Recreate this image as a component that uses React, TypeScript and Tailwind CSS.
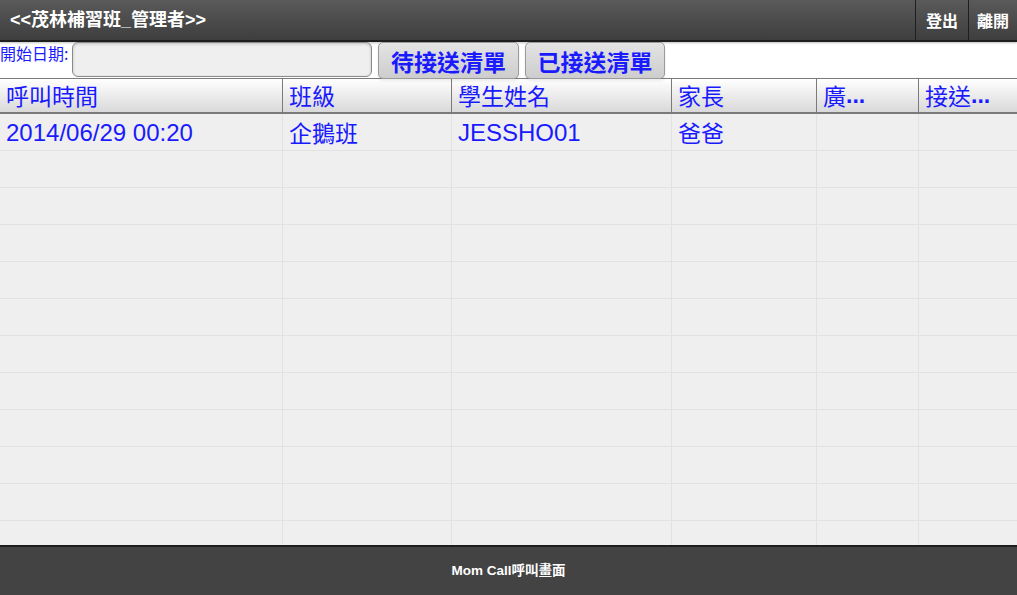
const cols = [
  { label: "呼叫時間", w: "w-[282px]" },
  { label: "班級", w: "w-[169px]" },
  { label: "學生姓名", w: "w-[220px]" },
  { label: "家長", w: "w-[145px]" },
  { label: "廣", dots: true, w: "w-[102px]" },
  { label: "接送", dots: true, w: "flex-1" },
];

const rows = [
  ["2014/06/29 00:20", "企鵝班", "JESSHO01", "爸爸", "", ""],
  ...Array.from({ length: 11 }, () => ["", "", "", "", "", ""]),
];

const cjk = "font-['Noto_Sans_CJK_TC',sans-serif]";
const latin = "font-['Liberation_Sans','Noto_Sans_CJK_TC',sans-serif]";

export default function App() {
  return (
    <div className="w-[1017px] h-[595px] flex flex-col bg-white overflow-hidden">
      {/* top bar */}
      <div className="h-[42px] flex items-stretch bg-gradient-to-b from-[#5a5a5a] to-[#3e3e3e] border-b-2 border-[#1e1e1e] shadow-[0_1px_2px_rgba(0,0,0,0.25)]">
        <div
          className={`flex-1 flex items-center pl-[10px] text-white font-bold text-[18px] ${latin}`}
        >
          &lt;&lt;茂林補習班_管理者&gt;&gt;
        </div>
        <button
          className={`w-[53px] border-l border-[#1f1f1f] text-white font-bold text-[16px] ${cjk}`}
        >
          登出
        </button>
        <button
          className={`w-[49px] border-l border-[#1f1f1f] text-white font-bold text-[16px] ${cjk}`}
        >
          離開
        </button>
      </div>

      {/* toolbar */}
      <div className="h-[36px] flex items-start relative z-10">
        <span
          className={`w-[68px] mt-[1px] text-[16px] leading-[20px] text-[#1a1aff] whitespace-nowrap ${cjk}`}
        >
          開始日期:
        </span>
        <div className="ml-[4px] w-[300px] h-[35px] rounded-[6px] border border-[#8a8a8a] bg-[#efefef] shadow-[inset_0_1px_3px_rgba(0,0,0,0.2)]" />
        <button
          className={`ml-[6px] w-[141px] h-[37px] rounded-[5px] border border-[#9a9a9a] bg-gradient-to-b from-[#e4e4e4] to-[#cdcdcd] text-[#1a1aff] font-bold text-[23px] leading-none pt-[2px] shadow-[0_2px_3px_rgba(0,0,0,0.08)] ${cjk}`}
        >
          待接送清單
        </button>
        <button
          className={`ml-[6px] w-[140px] h-[37px] rounded-[5px] border border-[#9a9a9a] bg-gradient-to-b from-[#e4e4e4] to-[#cdcdcd] text-[#1a1aff] font-bold text-[23px] leading-none pt-[2px] shadow-[0_2px_3px_rgba(0,0,0,0.08)] ${cjk}`}
        >
          已接送清單
        </button>
      </div>

      {/* table head */}
      <div className="h-[36px] flex border-t border-b-2 border-[#7a7a7a] bg-gradient-to-b from-white to-[#d9d9d9]">
        {cols.map((c, i) => (
          <div
            key={c.label}
            className={`${c.w} flex items-center pl-[6px] text-[23px] leading-none text-[#1a1aff] whitespace-nowrap ${cjk} ${
              i > 0 ? "border-l border-[#7a7a7a]" : ""
            }`}
          >
            {c.label}
            {c.dots && <span className={`font-bold ${latin}`}>...</span>}
          </div>
        ))}
      </div>

      {/* table body */}
      <div className="flex-1 overflow-hidden bg-[#efefef]">
        {rows.map((r, ri) => (
          <div key={ri} className="h-[37px] flex border-b border-[#e2e2e2]">
            {r.map((v, ci) => (
              <div
                key={ci}
                className={`${cols[ci].w} flex items-center pl-[6px] leading-none text-[#1a1aff] whitespace-nowrap ${
                  ci === 0 || ci === 2 ? `text-[24px] pt-[2px] ${latin}` : `text-[23px] ${cjk}`
                } ${ci > 0 ? "border-l border-[#e2e2e2]" : ""}`}
              >
                {v}
              </div>
            ))}
          </div>
        ))}
      </div>

      {/* footer */}
      <div
        className={`h-[50px] shrink-0 flex items-center justify-center border-t-2 border-[#1e1e1e] bg-[#434343] text-white text-[13.5px] font-bold ${latin}`}
      >
        Mom Call呼叫畫面
      </div>
    </div>
  );
}
